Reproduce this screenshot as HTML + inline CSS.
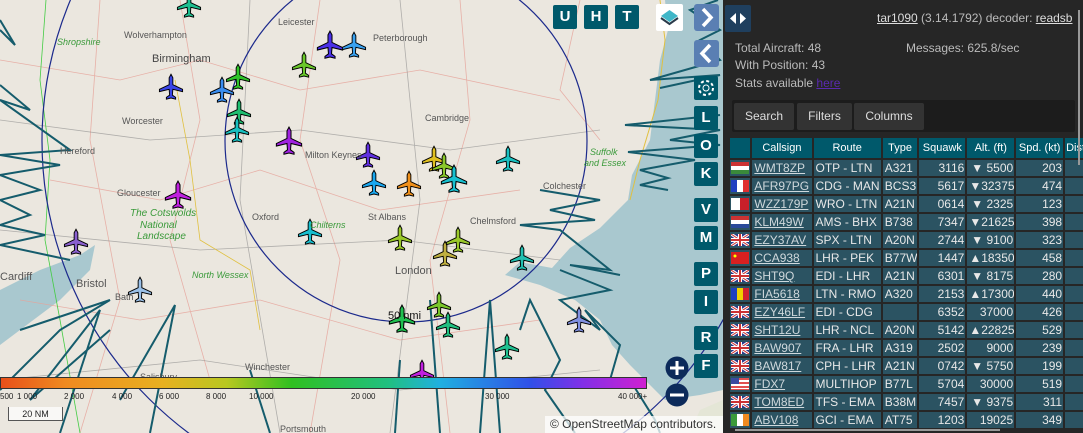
<!DOCTYPE html>
<html><head><meta charset="utf-8"><style>
*{margin:0;padding:0;box-sizing:border-box}
body{width:1083px;height:433px;overflow:hidden;background:#262626;font-family:"Liberation Sans",sans-serif;position:relative}
#map{position:absolute;left:0;top:0;width:723px;height:433px;overflow:hidden;background:#ebe7df}
.btn{position:absolute;width:24px;height:24px;background:#00596b;color:#fff;font-weight:bold;font-size:15px;text-align:center;line-height:24px;border-radius:2px}
.nav{position:absolute;background:#5a7fb3;border-radius:3px;width:25px;height:27px}
#panel{position:absolute;left:723px;top:0;width:360px;height:433px;background:#262626;color:#bbb;font-size:12px;overflow:hidden}
.t{position:absolute;white-space:nowrap}
.tab{position:absolute;top:103px;height:27px;background:#333;color:#ddd;font-size:12px;line-height:27px;text-align:center;border-radius:2px}
table{position:absolute;left:5px;top:136px;border-collapse:separate;border-spacing:2px 2px;font-size:12px;table-layout:fixed;width:385px}
td{background:#2b5362;color:#e8e8e8;height:16px;padding:0 1px 0 2px;white-space:nowrap;line-height:16px;overflow:hidden}
th{background:#00596b;color:#fff;font-weight:normal;font-size:11px;height:20px;white-space:nowrap;overflow:hidden;padding:0 1px}
td a{color:#cfd8dc;text-decoration:underline}
.r{text-align:right}
.f{padding:1px 1px}
.flag{width:18px;height:12px;display:block}
</style></head><body>
<div id="map">
<svg width="723" height="433" style="position:absolute;left:0;top:0">
<rect width="723" height="433" fill="#ebe7df"/>
<path d="M665,0 L668,30 L660,60 L655,100 L650,140 L632,175 L628,200 L600,228 L570,248 L552,268 L520,262 L505,275 L540,285 L575,300 L600,320 L612,345 L630,365 L650,385 L665,400 L700,395 L723,390 L723,0Z" fill="#a9c8cf"/>
<path d="M0,290 L40,270 L80,255 L95,245 L90,270 L60,300 L20,330 L0,345Z" fill="#a9c8cf"/>
<path d="M690,433 L700,410 L723,400 L723,433Z" fill="#e4e6d6"/>
<g stroke="#e6a39a" stroke-width="0.8" fill="none" opacity="0.8">
<path d="M0,60 L120,80 L200,60 L300,90 L420,70 L560,100"/><path d="M50,180 L160,200 L260,170 L380,210 L520,190"/><path d="M20,300 L140,320 L260,300 L400,340 L540,320"/><path d="M180,0 L200,120 L170,240 L210,380"/><path d="M320,0 L300,140 L340,260 L310,433"/><path d="M460,0 L470,120 L430,260 L450,433"/><path d="M580,0 L560,90 L600,140"/><path d="M100,0 L90,140 L120,300 L80,433"/>
</g>
<g stroke="#888" stroke-width="0.8" fill="none" opacity="0.6">
<path d="M0,120 L150,140 L300,130 L450,150 L600,130"/><path d="M0,230 L200,250 L400,240 L560,260"/><path d="M250,0 L240,200 L280,433"/><path d="M400,0 L420,200 L390,433"/><path d="M0,380 L200,360 L400,390 L600,370"/>
</g>
<path d="M46,0 L40,80 L50,160 L45,240 L60,320 L80,433" stroke="#4c4" stroke-width="0.8" fill="none"/>
<path d="M175,80 L190,160 L200,240 L250,270 L260,330" stroke="#e0c040" stroke-width="0.8" fill="none"/>
<path d="M660,0 L665,40 L658,100 L640,160 L630,200" stroke="#e0c040" stroke-width="1" fill="none"/>
<circle cx="406" cy="141" r="181" fill="none" stroke="#1c2a8c" stroke-width="1.2"/>
<circle cx="406" cy="141" r="364" fill="none" stroke="#1c2a8c" stroke-width="1.2"/>
<g stroke="#155c6c" stroke-width="2" fill="none">
<path d="M0,20 L15,45 L0,30"/><path d="M0,85 L30,110 L0,100 L70,150 L0,155 L60,165 L0,175 L40,190 L0,200 L30,215 L0,225 L45,235 L0,245 L70,260"/>
<path d="M0,390 L60,330 L110,300 L20,330"/><path d="M60,433 L100,310 L30,400 L110,330"/><path d="M150,433 L175,305 L120,400"/>
<path d="M718,0 L690,10 L720,30 L700,40 L720,60 L650,80 L720,75 L660,88"/>
<path d="M720,115 L625,125 L720,130 L670,140 L720,145 L628,152 L695,160 L640,170 L668,178 L640,185 L668,190"/>
<path d="M540,190 L600,200 L550,210 L595,220 L520,225 L560,230 L610,270 L570,265 L620,275"/>
<path d="M560,270 L610,290 L560,300 L600,330 L585,310 L620,345 L610,380"/>
<path d="M520,330 L530,300 L560,360 L545,390 L575,433"/><path d="M480,433 L490,300 L500,433"/><path d="M430,300 L440,433"/><path d="M270,433 L250,370"/><path d="M395,433 L400,360"/>
<path d="M630,380 L655,420 L660,433"/>
</g>
<defs><symbol id="pl" viewBox="-9.5 -9.5 19 19" overflow="visible"><path d="M0,-11 L1.6,-8 L1.6,-2 L10,2 L10,4 L1.6,2 L1.2,7 L4,9 L4,10.5 L0,9.5 L-4,10.5 L-4,9 L-1.2,7 L-1.6,2 L-10,4 L-10,2 L-1.6,-2 L-1.6,-8Z" stroke="#000" stroke-width="0.8"/></symbol></defs>
<g>
<use href="#pl" x="178" y="-6" width="22" height="22" fill="#1fbf90"/>
<use href="#pl" x="160" y="76" width="22" height="22" fill="#3a44e8"/>
<use href="#pl" x="211" y="79" width="22" height="22" fill="#3a8ef0"/>
<use href="#pl" x="227" y="66" width="22" height="22" fill="#2fc428"/>
<use href="#pl" x="228" y="101" width="22" height="22" fill="#1fbf70"/>
<use href="#pl" x="226" y="119" width="22" height="22" fill="#18c0c0"/>
<use href="#pl" x="277" y="129" width="24" height="24" fill="#a022e0"/>
<use href="#pl" x="293" y="54" width="22" height="22" fill="#6ac82a"/>
<use href="#pl" x="318" y="33" width="24" height="24" fill="#4a30e8"/>
<use href="#pl" x="343" y="34" width="22" height="22" fill="#3aa2f0"/>
<use href="#pl" x="357" y="144" width="22" height="22" fill="#6030e0"/>
<use href="#pl" x="363" y="172" width="22" height="22" fill="#1aa8f0"/>
<use href="#pl" x="398" y="173" width="22" height="22" fill="#f0901a"/>
<use href="#pl" x="423" y="148" width="22" height="22" fill="#e0c020"/>
<use href="#pl" x="433" y="155" width="22" height="22" fill="#8ac82a"/>
<use href="#pl" x="442" y="167" width="24" height="24" fill="#18c0d0"/>
<use href="#pl" x="497" y="148" width="22" height="22" fill="#18c0c0"/>
<use href="#pl" x="166" y="183" width="24" height="24" fill="#c020e0"/>
<use href="#pl" x="65" y="231" width="22" height="22" fill="#8a60d0"/>
<use href="#pl" x="129" y="279" width="22" height="22" fill="#9ac0e8"/>
<use href="#pl" x="299" y="221" width="22" height="22" fill="#18c0d0"/>
<use href="#pl" x="389" y="227" width="22" height="22" fill="#9ac82a"/>
<use href="#pl" x="434" y="243" width="22" height="22" fill="#c0b040"/>
<use href="#pl" x="447" y="229" width="22" height="22" fill="#9ac82a"/>
<use href="#pl" x="511" y="247" width="22" height="22" fill="#20c0b0"/>
<use href="#pl" x="428" y="294" width="22" height="22" fill="#7ac82a"/>
<use href="#pl" x="390" y="307" width="24" height="24" fill="#20c050"/>
<use href="#pl" x="437" y="314" width="22" height="22" fill="#20c080"/>
<use href="#pl" x="496" y="336" width="22" height="22" fill="#20c090"/>
<use href="#pl" x="568" y="309" width="22" height="22" fill="#8090e0"/>
<use href="#pl" x="411" y="362" width="22" height="22" fill="#c020e0"/>
</g>
<g font-family="Liberation Sans" font-size="9" fill="#555">
<text x="278" y="25">Leicester</text><text x="124" y="38">Wolverhampton</text><text x="152" y="62" font-size="11" fill="#444">Birmingham</text><text x="373" y="41">Peterborough</text><text x="122" y="124">Worcester</text><text x="60" y="154">Hereford</text><text x="425" y="121">Cambridge</text><text x="305" y="158">Milton Keynes</text><text x="117" y="196">Gloucester</text><text x="252" y="220">Oxford</text><text x="368" y="220">St Albans</text><text x="470" y="224">Chelmsford</text><text x="0" y="280" font-size="11">Cardiff</text><text x="76" y="287" font-size="11">Bristol</text><text x="115" y="300">Bath</text><text x="395" y="274" font-size="11">London</text><text x="140" y="380">Salisbury</text><text x="245" y="370">Winchester</text><text x="280" y="432">Portsmouth</text><text x="543" y="189">Colchester</text><text x="388" y="319" font-size="11" fill="#111">50 nmi</text>
</g>
<g font-family="Liberation Sans" font-size="9" font-style="italic" fill="#3a9a3a">
<text x="57" y="45">Shropshire</text><text x="130" y="216" font-size="10">The Cotswolds</text><text x="140" y="228" font-size="10">National</text><text x="137" y="239" font-size="10">Landscape</text><text x="192" y="278">North Wessex</text><text x="310" y="228">Chilterns</text><text x="590" y="155">Suffolk</text><text x="584" y="166">and Essex</text>
</g>
</svg>
<div class="btn" style="left:553px;top:5px">U</div>
<div class="btn" style="left:584px;top:5px">H</div>
<div class="btn" style="left:615px;top:5px">T</div>
<div style="position:absolute;left:656px;top:4px;width:27px;height:27px;background:#fff;border-radius:2px">
<svg width="27" height="27"><path d="M13.5,6 L22,12 L13.5,18 L5,12Z" fill="#3fb6c8"/><path d="M5,14 L13.5,20 L22,14" stroke="#2a3a4a" stroke-width="2" fill="none"/></svg></div>
<div class="nav" style="left:694px;top:4px"><svg width="25" height="27"><path d="M9,5 L17,13.5 L9,22" stroke="#fff" stroke-width="3.5" fill="none"/></svg></div>
<div class="nav" style="left:694px;top:40px"><svg width="25" height="27"><path d="M16,5 L8,13.5 L16,22" stroke="#fff" stroke-width="3.5" fill="none"/></svg></div>
<div class="btn" style="left:694px;top:76px"><svg width="24" height="24"><circle cx="12" cy="12" r="3" stroke="#fff" fill="none"/><circle cx="12" cy="12" r="7" stroke="#fff" stroke-width="2" stroke-dasharray="3 2.5" fill="none"/></svg></div>
<div class="btn" style="left:694px;top:106px">L</div>
<div class="btn" style="left:694px;top:134px">O</div>
<div class="btn" style="left:694px;top:162px">K</div>
<div class="btn" style="left:694px;top:198px">V</div>
<div class="btn" style="left:694px;top:226px">M</div>
<div class="btn" style="left:694px;top:262px">P</div>
<div class="btn" style="left:694px;top:290px">I</div>
<div class="btn" style="left:694px;top:326px">R</div>
<div class="btn" style="left:694px;top:354px">F</div>
<svg style="position:absolute;left:665px;top:356px" width="26" height="52"><circle cx="12" cy="12" r="11.5" fill="#0c2a5a"/><path d="M5,12H19M12,5V19" stroke="#fff" stroke-width="3"/><circle cx="12" cy="39" r="11.5" fill="#0c2a5a"/><path d="M5,39H19" stroke="#fff" stroke-width="3"/></svg>
<div style="position:absolute;left:0;top:377px;width:647px;height:12px;border:1px solid #333;background:linear-gradient(90deg,#e8501a 0%,#f08a20 10%,#e8b020 25%,#b8c820 35%,#30c020 45%,#20c080 60%,#20b0e0 68%,#3050e8 82%,#8030e8 90%,#d020d0 100%)"></div>
<div style="position:absolute;left:0;top:392px;width:660px;font-size:8px;color:#222">
<span class="t" style="left:0">500</span><span class="t" style="left:17px">1 000</span><span class="t" style="left:64px">2 000</span><span class="t" style="left:112px">4 000</span><span class="t" style="left:159px">6 000</span><span class="t" style="left:206px">8 000</span><span class="t" style="left:249px">10 000</span><span class="t" style="left:351px">20 000</span><span class="t" style="left:485px">30 000</span><span class="t" style="left:618px">40 000+</span></div>
<div style="position:absolute;left:8px;top:407px;width:55px;height:14px;background:rgba(255,255,255,.7);border:1px solid #555;border-top:none;font-size:9px;text-align:center;line-height:14px;color:#222">20 NM</div>
<div style="position:absolute;left:545px;top:416px;width:178px;height:17px;background:rgba(255,255,255,.75);font-size:12px;color:#333;line-height:17px;padding-left:5px">© OpenStreetMap contributors.</div>
</div>
<div id="panel">
<div style="position:absolute;left:2px;top:5px;width:26px;height:27px;background:#1f3f5e;border-radius:2px"><svg width="26" height="27"><path d="M11,8 L5,13.5 L11,19Z M15,8 L21,13.5 L15,19Z" fill="#fff"/></svg></div>
<div class="t" style="left:154px;top:11px;font-size:12px;color:#bbb"><u style="color:#ddd">tar1090</u> (3.14.1792) decoder: <u style="color:#ddd">readsb</u></div>
<div class="t" style="left:12px;top:41px">Total Aircraft: 48</div>
<div class="t" style="left:183px;top:41px">Messages: 625.8/sec</div>
<div class="t" style="left:12px;top:58px">With Position: 43</div>
<div class="t" style="left:12px;top:76px">Stats available <u style="color:#5a2ab0">here</u></div>
<div style="position:absolute;left:9px;top:100px;width:343px;height:32px;background:#1c1c1c;border-radius:2px"></div>
<div class="tab" style="left:11px;width:60px">Search</div>
<div class="tab" style="left:74px;width:55px">Filters</div>
<div class="tab" style="left:131px;width:70px">Columns</div>
<table>
<colgroup><col style="width:20px"><col style="width:58px"><col style="width:66px"><col style="width:34px"><col style="width:45px"><col style="width:46px"><col style="width:46px"><col style="width:45px"></colgroup>
<tr><th></th><th>Callsign</th><th>Route</th><th>Type</th><th>Squawk</th><th>Alt. (ft)</th><th>Spd. (kt)</th><th style="text-align:left">Dist.</th></tr>
<tr><td class="f"><svg class="flag"><rect width="18" height="4" fill="#c33"/><rect y="4" width="18" height="4" fill="#fff"/><rect y="8" width="18" height="4" fill="#3a8a3a"/></svg></td><td><a>WMT8ZP</a></td><td>OTP - LTN</td><td>A321</td><td class="r">3116</td><td class="r">▼ 5500</td><td class="r">203</td><td></td></tr>
<tr><td class="f"><svg class="flag"><rect width="6" height="12" fill="#1f3fc0"/><rect x="6" width="6" height="12" fill="#fff"/><rect x="12" width="6" height="12" fill="#e03030"/></svg></td><td><a>AFR97PG</a></td><td>CDG - MAN</td><td>BCS3</td><td class="r">5617</td><td class="r">▼32375</td><td class="r">474</td><td></td></tr>
<tr><td class="f"><svg class="flag"><rect width="9" height="12" fill="#fff"/><rect x="9" width="9" height="12" fill="#c8202a"/></svg></td><td><a>WZZ179P</a></td><td>WRO - LTN</td><td>A21N</td><td class="r">0614</td><td class="r">▼ 2325</td><td class="r">123</td><td></td></tr>
<tr><td class="f"><svg class="flag"><rect width="18" height="4" fill="#c33"/><rect y="4" width="18" height="4" fill="#fff"/><rect y="8" width="18" height="4" fill="#2a4a9a"/></svg></td><td><a>KLM49W</a></td><td>AMS - BHX</td><td>B738</td><td class="r">7347</td><td class="r">▼21625</td><td class="r">398</td><td></td></tr>
<tr><td class="f"><svg class="flag"><use href="#uk"/><defs><symbol id="uk"><rect width="18" height="12" fill="#2a3a8a"/><path d="M0,0L18,12M18,0L0,12" stroke="#fff" stroke-width="3"/><path d="M0,0L18,12M18,0L0,12" stroke="#c33" stroke-width="1"/><path d="M9,0V12M0,6H18" stroke="#fff" stroke-width="4"/><path d="M9,0V12M0,6H18" stroke="#c33" stroke-width="2"/></symbol></defs></svg></td><td><a>EZY37AV</a></td><td>SPX - LTN</td><td>A20N</td><td class="r">2744</td><td class="r">▼ 9100</td><td class="r">323</td><td></td></tr>
<tr><td class="f"><svg class="flag"><rect width="18" height="12" fill="#d82020"/><circle cx="4" cy="4" r="1.5" fill="#ff0"/></svg></td><td><a>CCA938</a></td><td>LHR - PEK</td><td>B77W</td><td class="r">1447</td><td class="r">▲18350</td><td class="r">458</td><td></td></tr>
<tr><td class="f"><svg class="flag"><use href="#uk"/></svg></td><td><a>SHT9Q</a></td><td>EDI - LHR</td><td>A21N</td><td class="r">6301</td><td class="r">▼ 8175</td><td class="r">280</td><td></td></tr>
<tr><td class="f"><svg class="flag"><rect width="6" height="12" fill="#1f3fc0"/><rect x="6" width="6" height="12" fill="#f0d000"/><rect x="12" width="6" height="12" fill="#d02030"/></svg></td><td><a>FIA5618</a></td><td>LTN - RMO</td><td>A320</td><td class="r">2153</td><td class="r">▲17300</td><td class="r">440</td><td></td></tr>
<tr><td class="f"><svg class="flag"><use href="#uk"/></svg></td><td><a>EZY46LF</a></td><td>EDI - CDG</td><td></td><td class="r">6352</td><td class="r">37000</td><td class="r">426</td><td></td></tr>
<tr><td class="f"><svg class="flag"><use href="#uk"/></svg></td><td><a>SHT12U</a></td><td>LHR - NCL</td><td>A20N</td><td class="r">5142</td><td class="r">▲22825</td><td class="r">529</td><td></td></tr>
<tr><td class="f"><svg class="flag"><use href="#uk"/></svg></td><td><a>BAW907</a></td><td>FRA - LHR</td><td>A319</td><td class="r">2502</td><td class="r">9000</td><td class="r">239</td><td></td></tr>
<tr><td class="f"><svg class="flag"><use href="#uk"/></svg></td><td><a>BAW817</a></td><td>CPH - LHR</td><td>A21N</td><td class="r">0742</td><td class="r">▼ 5750</td><td class="r">199</td><td></td></tr>
<tr><td class="f"><svg class="flag"><rect width="18" height="12" fill="#e05050"/><rect y="2" width="18" height="2" fill="#fff"/><rect y="6" width="18" height="2" fill="#fff"/><rect y="10" width="18" height="1" fill="#fff"/><rect width="8" height="6" fill="#3a4aa0"/></svg></td><td><a>FDX7</a></td><td>MULTIHOP</td><td>B77L</td><td class="r">5704</td><td class="r">30000</td><td class="r">519</td><td></td></tr>
<tr><td class="f"><svg class="flag"><use href="#uk"/></svg></td><td><a>TOM8ED</a></td><td>TFS - EMA</td><td>B38M</td><td class="r">7457</td><td class="r">▼ 9375</td><td class="r">311</td><td></td></tr>
<tr><td class="f"><svg class="flag"><rect width="6" height="12" fill="#3a9a3a"/><rect x="6" width="6" height="12" fill="#fff"/><rect x="12" width="6" height="12" fill="#f08a20"/></svg></td><td><a>ABV108</a></td><td>GCI - EMA</td><td>AT75</td><td class="r">1203</td><td class="r">19025</td><td class="r">349</td><td></td></tr>
</table>
<div style="position:absolute;left:355px;top:10px;width:2px;height:155px;background:#999"></div>
<div style="position:absolute;left:12px;top:429px;width:265px;height:2px;background:#999"></div>
</div>
</body></html>
